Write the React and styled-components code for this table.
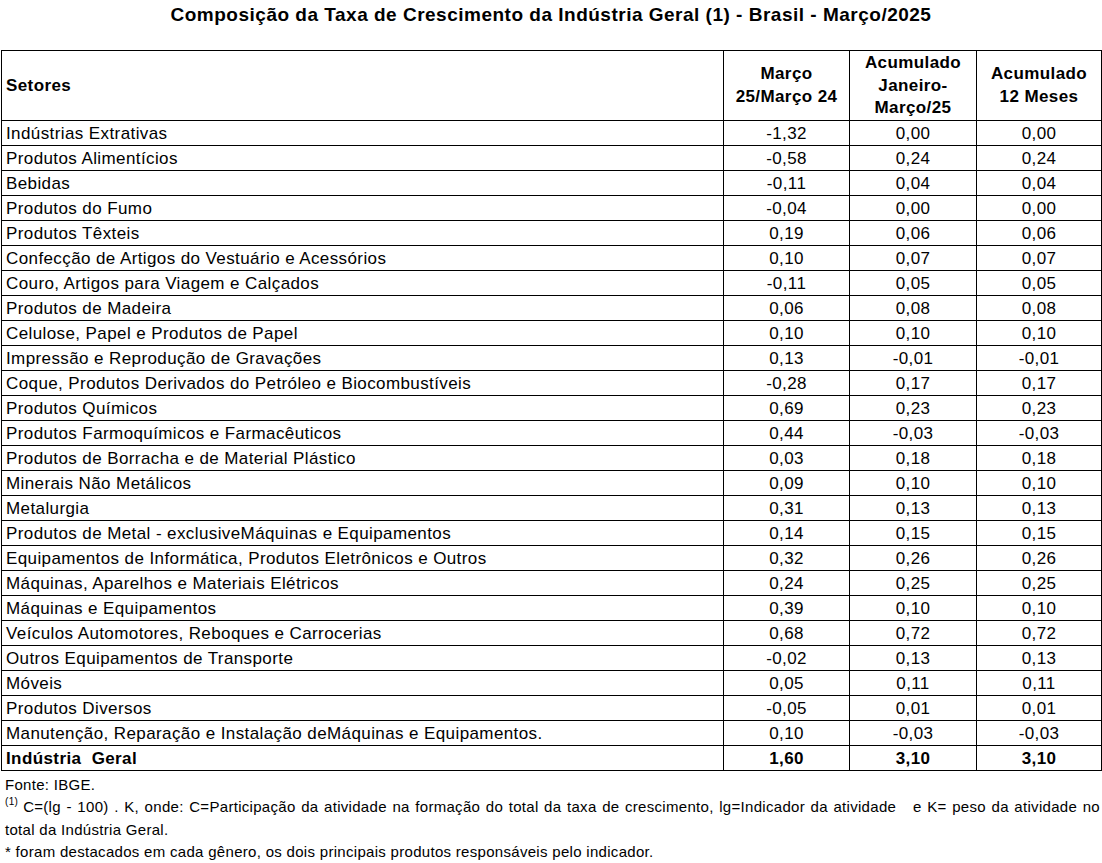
import React from "react";
import styled, { createGlobalStyle } from "styled-components";

const Global = createGlobalStyle`
  html, body { margin: 0; padding: 0; background: #fff; }
  body { font-family: "Liberation Sans", Arial, sans-serif; color: #000; }
`;

const Page = styled.div`
  width: 1102px;
  padding: 0 1px 0 1px;
  box-sizing: border-box;
`;

const Title = styled.h1`
  margin: 0;
  height: 50px;
  padding-top: 4px;
  box-sizing: border-box;
  font-size: 19px;
  letter-spacing: 0.5px;
  font-weight: bold;
  text-align: center;
  line-height: 22px;
`;

const Table = styled.table`
  width: 1100px;
  border-collapse: collapse;
  table-layout: fixed;
  font-size: 17px;
  letter-spacing: 0.4px;
`;

const Th = styled.th`
  border: 1px solid #000;
  height: 65px;
  padding: 1px 4px 0;
  font-weight: bold;
  line-height: 22.5px;
  text-align: ${(p) => (p.$left ? "left" : "center")};
  vertical-align: middle;
`;

const Td = styled.td`
  border: 1px solid #000;
  height: 22px;
  padding: 2px 4px 0;
  line-height: 20px;
  white-space: nowrap;
  font-weight: ${(p) => (p.$bold ? "bold" : "normal")};
  text-align: ${(p) => (p.$left ? "left" : "center")};
`;

const Notes = styled.div`
  font-size: 15px;
  letter-spacing: 0.3px;
  line-height: 22.5px;
  padding: 3px 1px 0 4px;
`;

const Note = styled.p`
  margin: 0;
  text-align: justify;
`;

const Sup = styled.span`
  display: inline-block;
  font-size: 10px;
  line-height: 10px;
  vertical-align: 7px;
  margin-right: 5px;
`;

const rows = [
  ["Indústrias Extrativas", "-1,32", "0,00", "0,00"],
  ["Produtos Alimentícios", "-0,58", "0,24", "0,24"],
  ["Bebidas", "-0,11", "0,04", "0,04"],
  ["Produtos do Fumo", "-0,04", "0,00", "0,00"],
  ["Produtos Têxteis", "0,19", "0,06", "0,06"],
  ["Confecção de Artigos do Vestuário e Acessórios", "0,10", "0,07", "0,07"],
  ["Couro, Artigos para Viagem e Calçados", "-0,11", "0,05", "0,05"],
  ["Produtos de Madeira", "0,06", "0,08", "0,08"],
  ["Celulose, Papel e Produtos de Papel", "0,10", "0,10", "0,10"],
  ["Impressão e Reprodução de Gravações", "0,13", "-0,01", "-0,01"],
  ["Coque, Produtos Derivados do Petróleo e Biocombustíveis", "-0,28", "0,17", "0,17"],
  ["Produtos Químicos", "0,69", "0,23", "0,23"],
  ["Produtos Farmoquímicos e Farmacêuticos", "0,44", "-0,03", "-0,03"],
  ["Produtos de Borracha e de Material Plástico", "0,03", "0,18", "0,18"],
  ["Minerais Não Metálicos", "0,09", "0,10", "0,10"],
  ["Metalurgia", "0,31", "0,13", "0,13"],
  ["Produtos de Metal - exclusiveMáquinas e Equipamentos", "0,14", "0,15", "0,15"],
  ["Equipamentos de Informática, Produtos Eletrônicos e Outros", "0,32", "0,26", "0,26"],
  ["Máquinas, Aparelhos e Materiais Elétricos", "0,24", "0,25", "0,25"],
  ["Máquinas e Equipamentos", "0,39", "0,10", "0,10"],
  ["Veículos Automotores, Reboques e Carrocerias", "0,68", "0,72", "0,72"],
  ["Outros Equipamentos de Transporte", "-0,02", "0,13", "0,13"],
  ["Móveis", "0,05", "0,11", "0,11"],
  ["Produtos Diversos", "-0,05", "0,01", "0,01"],
  ["Manutenção, Reparação e Instalação deMáquinas e Equipamentos.", "0,10", "-0,03", "-0,03"],
];

export default function App() {
  return (
    <Page>
      <Global />
      <Title>Composição da Taxa de Crescimento da Indústria Geral (1) - Brasil - Março/2025</Title>
      <Table>
        <colgroup>
          <col style={{ width: 722 }} />
          <col style={{ width: 126 }} />
          <col style={{ width: 127 }} />
          <col style={{ width: 125 }} />
        </colgroup>
        <thead>
          <tr>
            <Th $left>Setores</Th>
            <Th>Março<br />25/Março 24</Th>
            <Th>Acumulado<br />Janeiro-<br />Março/25</Th>
            <Th>Acumulado<br />12 Meses</Th>
          </tr>
        </thead>
        <tbody>
          {rows.map((r) => (
            <tr key={r[0]}>
              <Td $left>{r[0]}</Td>
              <Td>{r[1]}</Td>
              <Td>{r[2]}</Td>
              <Td>{r[3]}</Td>
            </tr>
          ))}
          <tr>
            <Td $left $bold>Indústria&nbsp; Geral</Td>
            <Td $bold>1,60</Td>
            <Td $bold>3,10</Td>
            <Td $bold>3,10</Td>
          </tr>
        </tbody>
      </Table>
      <Notes>
        <Note>Fonte: IBGE.</Note>
        <Note>
          <Sup>(1)</Sup>C=(lg - 100) . K, onde: C=Participação da atividade na formação do total da taxa de crescimento, lg=Indicador da atividade &nbsp; e K= peso da atividade no total da Indústria Geral.
        </Note>
        <Note>* foram destacados em cada gênero, os dois principais produtos responsáveis pelo indicador.</Note>
      </Notes>
    </Page>
  );
}
